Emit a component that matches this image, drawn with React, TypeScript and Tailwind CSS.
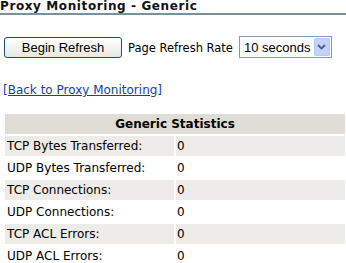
import React from 'react';

const stats = [
  { label: 'TCP Bytes Transferred:', value: '0' },
  { label: 'UDP Bytes Transferred:', value: '0' },
  { label: 'TCP Connections:', value: '0' },
  { label: 'UDP Connections:', value: '0' },
  { label: 'TCP ACL Errors:', value: '0' },
  { label: 'UDP ACL Errors:', value: '0' },
];

export default function App() {
  return (
    <div className="w-[346px] h-[263px] overflow-hidden bg-white text-black font-['DejaVu_Sans',sans-serif]">
      {/* title */}
      <div className="border-b-[2px] border-[#7a909c] h-[15px] leading-[12px]">
        <h1 className="text-[12px] font-bold tracking-[0.6px] text-[#111]">Proxy Monitoring - Generic</h1>
      </div>

      {/* refresh controls */}
      <div className="flex items-center mt-[21px] ml-[4px]">
        <button className="w-[118px] h-[21px] rounded-[3px] border border-[#1c4f7c] bg-gradient-to-b from-white to-[#e8e8e2] font-['Liberation_Sans',sans-serif] text-[13px] leading-none text-black">
          Begin Refresh
        </button>
        <span className="ml-[6px] text-[11.5px] mt-[4px]">Page Refresh Rate</span>
        <div className="ml-[6px] w-[93px] h-[22px] border border-[#7f9db9] flex items-center justify-between pl-[4px] pr-[1px]">
          <span className="font-['Liberation_Sans',sans-serif] text-[13px] leading-none">10 seconds</span>
          <div className="w-[16px] h-[18px] rounded-[2px] bg-[#c3d3fd] border border-[#b4c8f6] flex items-center justify-center">
            <svg width="9" height="6" viewBox="0 0 9 6">
              <path d="M1 1l3.5 3.5L8 1" fill="none" stroke="#4d6185" strokeWidth="1.8" />
            </svg>
          </div>
        </div>
      </div>

      {/* back link */}
      <div className="mt-[19px] ml-[3px]">
        <a href="#" className="text-[12px] text-[#1c3aa8] underline">[Back to Proxy Monitoring]</a>
      </div>

      {/* stats table */}
      <div className="mt-[13px] ml-[5px] mr-[1px] flex flex-col gap-[2px] text-[12px]">
        <div className="h-[20px] bg-[#e0ddd6] flex items-center justify-center font-bold">Generic Statistics</div>
        {stats.map((s, i) => (
          <div key={i} className="flex gap-[2px] h-[20px]">
            <div className={`w-[169px] flex items-center pl-[2px] ${i % 2 === 0 ? 'bg-[#eeece8]' : 'bg-white'}`}>{s.label}</div>
            <div className={`flex-1 flex items-center pl-[1px] ${i % 2 === 0 ? 'bg-[#eeece8]' : 'bg-white'}`}>{s.value}</div>
          </div>
        ))}
      </div>
    </div>
  );
}
